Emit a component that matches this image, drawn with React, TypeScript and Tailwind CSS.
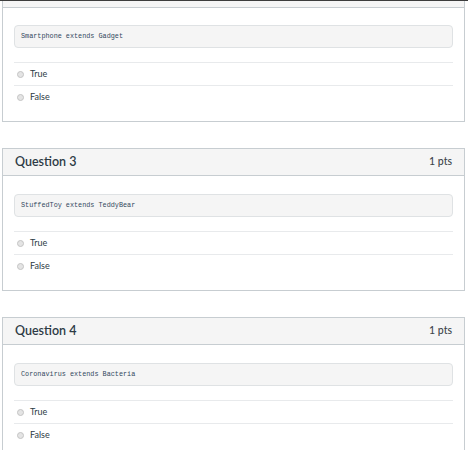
import React from "react";

type Question = { title?: string; code: string };

const questions: Question[] = [
  { code: "Smartphone extends Gadget" },
  { title: "Question 3", code: "StuffedToy extends TeddyBear" },
  { title: "Question 4", code: "Coronavirus extends Bacteria" },
];

export default function App() {
  return (
    <div className="w-[468px] h-[450px] overflow-hidden bg-white font-['Lato','Liberation_Sans',sans-serif] text-[#2d3b45]">
      <div className="h-px bg-[#3d3d3d]" />
      <div className="pl-[2px] pr-[3px] flex flex-col gap-[26px]">
        {questions.map((q, i) => (
          <QuestionPanel key={i} q={q} first={i === 0} />
        ))}
      </div>
    </div>
  );
}

function QuestionPanel({ q, first }: { q: Question; first: boolean }) {
  return (
    <div className={`border-x border-b border-[#c7cdd1] ${first ? "" : "border-t"}`}>
      {first ? (
        <div className="h-[7px] bg-[#f5f5f5] border-b border-[#c7cdd1]" />
      ) : (
        <div className="h-[27px] bg-[#f5f5f5] border-b border-[#c7cdd1] flex items-center justify-between pl-[12px] pr-[12px]">
          <span className="text-[12.5px] font-semibold">{q.title}</span>
          <span className="text-[10.5px] font-medium text-[#3d454c]">1 pts</span>
        </div>
      )}
      <div className={`px-[11px] pb-[13px] ${first ? "pt-[17px]" : "pt-[18px]"}`}>
        <div className="h-[23px] flex items-center px-[6px] bg-[#f5f5f5] border border-[#dfe2e4] rounded-[4px]">
          <code className="font-['Liberation_Mono','DejaVu_Sans_Mono',monospace] text-[6.8px] text-[#34495e]">{q.code}</code>
        </div>
        <div className="mt-[14px]">
          {["True", "False"].map((a) => (
            <div key={a} className="h-[23px] border-t border-[#e8eaec] flex items-center gap-[6px] pl-[3px]">
              <span className="w-[7px] h-[7px] rounded-full bg-[#e4e4e4] border border-[#c4c4c4]" />
              <span className="text-[9px]">{a}</span>
            </div>
          ))}
        </div>
      </div>
    </div>
  );
}
